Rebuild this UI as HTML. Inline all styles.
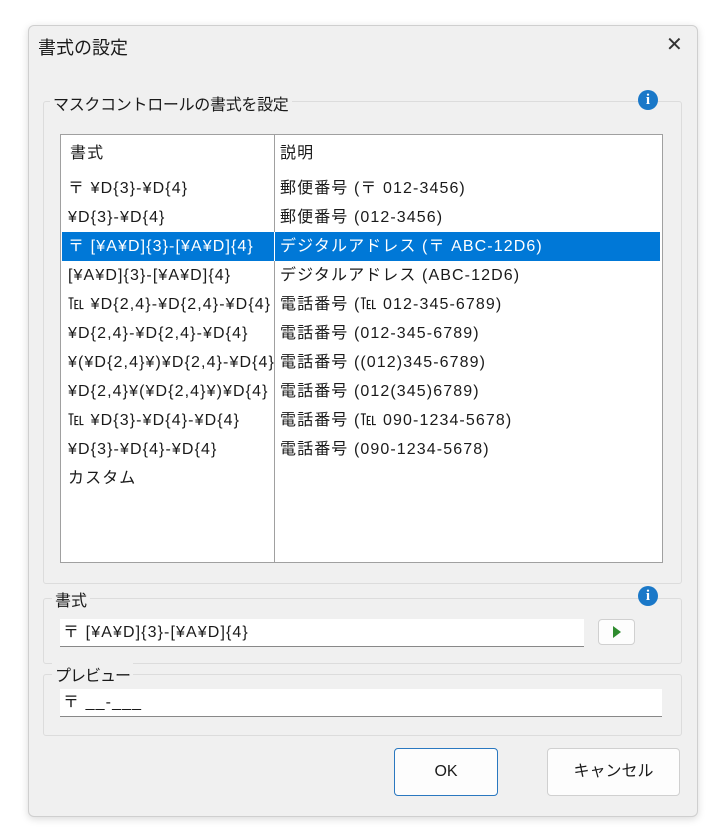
<html><head><style>
body{margin:0;width:726px;height:840px;background:#fff;font-family:"Liberation Sans","Noto Sans CJK JP",sans-serif;font-size:15px;color:#1a1a1a;position:relative;overflow:hidden}
.a{position:absolute}
.dlg{left:28px;top:25px;width:668px;height:790px;background:#f0f0f0;border:1px solid #cfcfcf;border-radius:6px;box-shadow:0 2px 8px rgba(0,0,0,.15)}
.grp{border:1px solid #dcdcdc;border-radius:3px}
.lbl{background:#f0f0f0;padding:0 3px}
.row{position:absolute;left:0;height:29px;line-height:29px;width:600px;font-size:16px;letter-spacing:1.1px}
.row span{position:absolute}
.inp{background:#fff;border-bottom:1px solid #888;font-size:16px;letter-spacing:1.1px}
.info{width:20px;height:20px;border-radius:50%;background:#1a78c8;color:#fff;font-weight:bold;font-size:15px;text-align:center;line-height:20px;font-family:"Liberation Serif",serif}
.btn{background:#fdfdfd;border:1px solid #d0d0d0;border-radius:4px;text-align:center;font-size:16px}
</style></head><body>
<div class="a dlg"></div>
<div class="a" style="left:38px;top:34px;font-size:18px">書式の設定</div>
<div class="a" style="left:666px;top:32px;font-size:20px;color:#333">✕</div>

<div class="a grp" style="left:43px;top:101px;width:637px;height:481px"></div>
<div class="a lbl" style="left:50px;top:91px;font-size:16px;letter-spacing:-0.3px">マスクコントロールの書式を設定</div>
<div class="a info" style="left:638px;top:90px">i</div>

<div class="a" style="left:60px;top:134px;width:601px;height:427px;background:#fff;border:1px solid #a0a0a0">
 <div class="a" style="left:213px;top:0;width:1px;height:427px;background:#a0a0a0"></div>
 <div class="row" style="top:4px"><span style="left:9px">書式</span><span style="left:219px">説明</span></div>
 <div class="row" style="top:39px"><span style="left:7px">〒 ¥D{3}-¥D{4}</span><span style="left:219px">郵便番号 (〒 012-3456)</span></div>
 <div class="row" style="top:68px"><span style="left:7px">¥D{3}-¥D{4}</span><span style="left:219px">郵便番号 (012-3456)</span></div>
 <div class="row" style="top:97px;left:1px;width:598px;background:#0078d7;color:#fff"><span style="left:6px">〒 [¥A¥D]{3}-[¥A¥D]{4}</span><span style="left:212px;top:0;width:1px;height:29px;background:#fff"></span><span style="left:218px">デジタルアドレス (〒 ABC-12D6)</span></div>
 <div class="row" style="top:126px"><span style="left:7px">[¥A¥D]{3}-[¥A¥D]{4}</span><span style="left:219px">デジタルアドレス (ABC-12D6)</span></div>
 <div class="row" style="top:155px"><span style="left:7px">℡ ¥D{2,4}-¥D{2,4}-¥D{4}</span><span style="left:219px">電話番号 (℡ 012-345-6789)</span></div>
 <div class="row" style="top:184px"><span style="left:7px">¥D{2,4}-¥D{2,4}-¥D{4}</span><span style="left:219px">電話番号 (012-345-6789)</span></div>
 <div class="row" style="top:213px"><span style="left:7px">¥(¥D{2,4}¥)¥D{2,4}-¥D{4}</span><span style="left:219px">電話番号 ((012)345-6789)</span></div>
 <div class="row" style="top:242px"><span style="left:7px">¥D{2,4}¥(¥D{2,4}¥)¥D{4}</span><span style="left:219px">電話番号 (012(345)6789)</span></div>
 <div class="row" style="top:271px"><span style="left:7px">℡ ¥D{3}-¥D{4}-¥D{4}</span><span style="left:219px">電話番号 (℡ 090-1234-5678)</span></div>
 <div class="row" style="top:300px"><span style="left:7px">¥D{3}-¥D{4}-¥D{4}</span><span style="left:219px">電話番号 (090-1234-5678)</span></div>
 <div class="row" style="top:329px"><span style="left:7px">カスタム</span></div>
</div>

<div class="a grp" style="left:43px;top:598px;width:637px;height:64px"></div>
<div class="a lbl" style="left:52px;top:587px;font-size:16px">書式</div>
<div class="a info" style="left:638px;top:586px">i</div>
<div class="a inp" style="left:60px;top:619px;width:524px;height:27px;line-height:27px"><span style="padding-left:3px">〒 [¥A¥D]{3}-[¥A¥D]{4}</span></div>
<div class="a btn" style="left:598px;top:619px;width:35px;height:24px"><svg width="10" height="12" style="margin-top:6px"><path d="M1 0L9 6L1 12Z" fill="#2e8b2e"/></svg></div>

<div class="a grp" style="left:43px;top:674px;width:637px;height:60px"></div>
<div class="a lbl" style="left:52px;top:662px;font-size:16px;letter-spacing:-1px">プレビュー</div>
<div class="a inp" style="left:60px;top:689px;width:602px;height:27px;line-height:27px"><span style="padding-left:3px">〒 __-___</span></div>

<div class="a btn" style="left:394px;top:748px;width:102px;height:46px;line-height:46px;border:1px solid #2a78c0">OK</div>
<div class="a btn" style="left:547px;top:748px;width:131px;height:46px;line-height:46px">キャンセル</div>
</body></html>
